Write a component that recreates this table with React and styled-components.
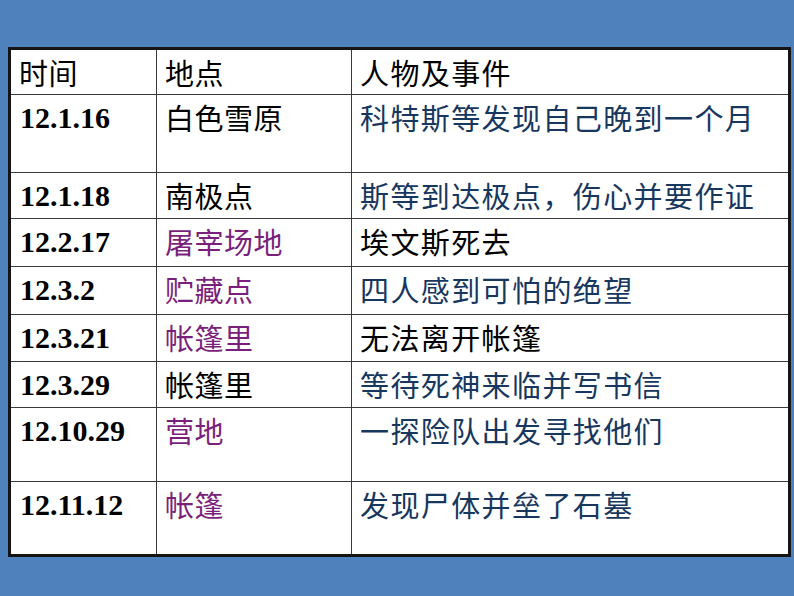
import React from "react";
import styled, { createGlobalStyle } from "styled-components";

const Global = createGlobalStyle`
  html, body { margin: 0; padding: 0; background: #4f81bd; }
  body { width: 794px; height: 596px; overflow: hidden; }
`;

const Page = styled.div`
  width: 794px;
  height: 596px;
  background: #4f81bd;
  padding: 47px 0 0 8px;
  box-sizing: border-box;
`;

const Table = styled.table`
  width: 780px;
  border-collapse: collapse;
  table-layout: fixed;
  background: #ffffff;
  border: 3px solid #151515;
`;

const Row = styled.tr`
  height: ${(p) => p.$h}px;
`;

const Cell = styled.td`
  border: 1px solid #3a3a3a;
  vertical-align: top;
  padding: 5px 0 0 8px;
  box-sizing: border-box;
  font-family: "Noto Sans CJK SC", "Noto Sans", sans-serif;
  font-size: 29px;
  line-height: 35px;
  color: ${(p) => p.$color || "#000000"};
  letter-spacing: ${(p) => (p.$col === 3 ? "1.4px" : "0.5px")};
  white-space: nowrap;
  overflow: hidden;
`;

const DateCell = styled(Cell)`
  font-family: "Liberation Serif", "Times New Roman", serif;
  font-weight: bold;
  font-size: 30px;
  letter-spacing: 0;
  padding-left: 9px;
`;

const BLUE = "#17375e";
const PURPLE = "#7b1f7d";

const rows = [
  { h: 78, d: "12.1.16", p: "白色雪原", pc: null, e: "科特斯等发现自己晚到一个月", ec: BLUE },
  { h: 46, d: "12.1.18", p: "南极点", pc: null, e: "斯等到达极点，伤心并要作证", ec: BLUE },
  { h: 48, d: "12.2.17", p: "屠宰场地", pc: PURPLE, e: "埃文斯死去", ec: null },
  { h: 48, d: "12.3.2", p: "贮藏点", pc: PURPLE, e: "四人感到可怕的绝望", ec: BLUE },
  { h: 47, d: "12.3.21", p: "帐篷里", pc: PURPLE, e: "无法离开帐篷", ec: null },
  { h: 46, d: "12.3.29", p: "帐篷里", pc: null, e: "等待死神来临并写书信", ec: BLUE },
  { h: 74, d: "12.10.29", p: "营地", pc: PURPLE, e: "一探险队出发寻找他们", ec: BLUE },
  { h: 74, d: "12.11.12", p: "帐篷", pc: PURPLE, e: "发现尸体并垒了石墓", ec: BLUE },
];

export default function App() {
  return (
    <>
      <Global />
      <Page>
        <Table>
          <colgroup>
            <col style={{ width: 147 }} />
            <col style={{ width: 195 }} />
            <col style={{ width: 438 }} />
          </colgroup>
          <tbody>
            <Row $h={46}>
              <Cell $col={1}>时间</Cell>
              <Cell $col={2}>地点</Cell>
              <Cell $col={3}>人物及事件</Cell>
            </Row>
            {rows.map((r) => (
              <Row key={r.d} $h={r.h}>
                <DateCell $col={1}>{r.d}</DateCell>
                <Cell $col={2} $color={r.pc}>{r.p}</Cell>
                <Cell $col={3} $color={r.ec}>{r.e}</Cell>
              </Row>
            ))}
          </tbody>
        </Table>
      </Page>
    </>
  );
}
